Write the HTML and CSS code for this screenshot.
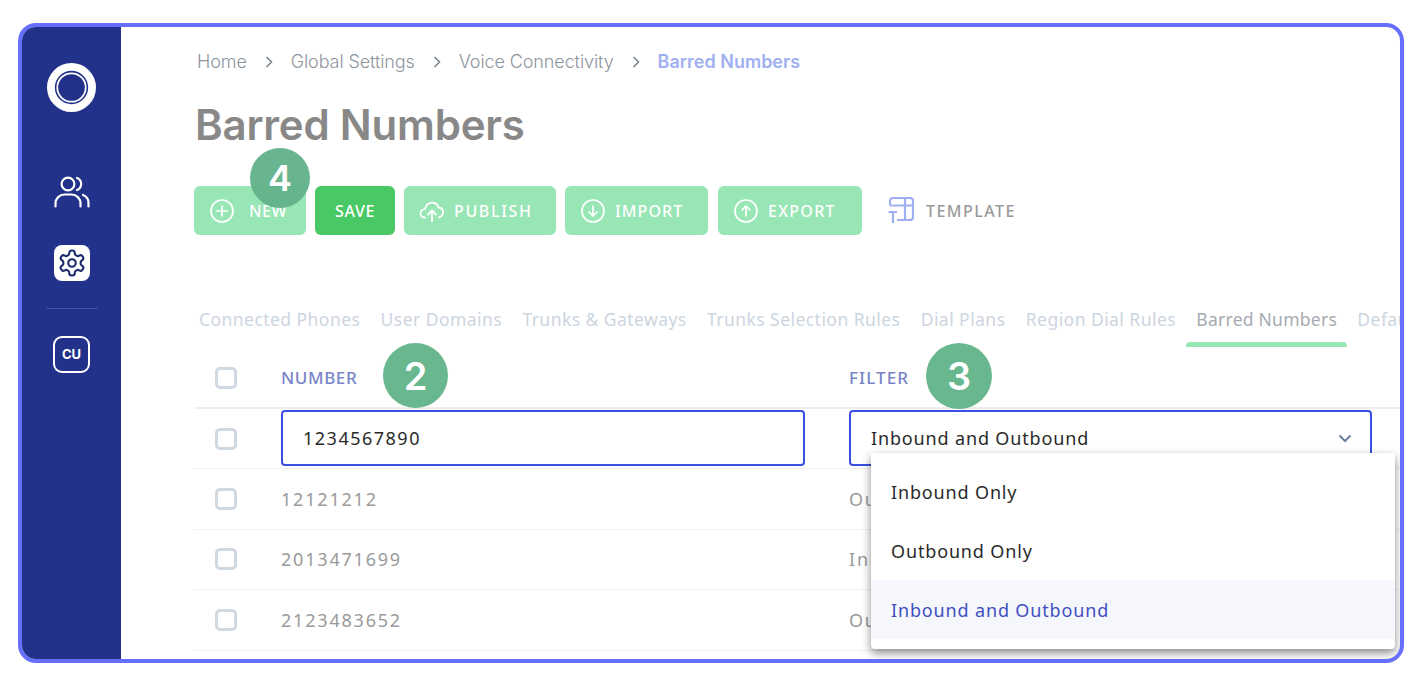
FILE: index.html
```html
<!DOCTYPE html>
<html lang="en">
<head>
<meta charset="utf-8">
<title>Barred Numbers</title>
<link rel="stylesheet" href="styles.css">
</head>
<body>
<div class="frame">
  <aside class="sidebar">
    <svg class="logo" viewBox="0 0 50 50"><circle cx="25" cy="25" r="25" fill="#fff"/><circle cx="25" cy="25" r="16.200" fill="none" stroke="#22328a" stroke-width="1.600"/><circle cx="25" cy="25" r="13.600" fill="#22328a"/></svg>
    <svg class="nav-users" viewBox="0 0 36 32" fill="none" stroke="#fff" stroke-width="2.200" stroke-linecap="round" stroke-linejoin="round"><circle cx="14" cy="8" r="6.400"/><path d="M1.500 30.500v-3a9 9 0 0 1 9-9h7a9 9 0 0 1 9 9v3"/><path d="M23 2a6.400 6.400 0 0 1 0 12"/><path d="M29 19a8.500 8.500 0 0 1 5.500 8v3.500"/></svg>
    <div class="nav-settings">
      <svg viewBox="0 0 24 24" fill="none" stroke="#1e2a6e" stroke-width="1.700" stroke-linecap="round" stroke-linejoin="round"><path d="M12.220 2h-.44a2 2 0 0 0-2 2v.18a2 2 0 0 1-1 1.730l-.43.250a2 2 0 0 1-2 0l-.15-.08a2 2 0 0 0-2.730.730l-.22.380a2 2 0 0 0 .730 2.730l.15.100a2 2 0 0 1 1 1.720v.510a2 2 0 0 1-1 1.740l-.15.090a2 2 0 0 0-.730 2.730l.22.380a2 2 0 0 0 2.730.730l.15-.08a2 2 0 0 1 2 0l.43.250a2 2 0 0 1 1 1.730V20a2 2 0 0 0 2 2h.44a2 2 0 0 0 2-2v-.18a2 2 0 0 1 1-1.730l.43-.25a2 2 0 0 1 2 0l.15.08a2 2 0 0 0 2.730-.73l.22-.39a2 2 0 0 0-.73-2.730l-.15-.08a2 2 0 0 1-1-1.740v-.5a2 2 0 0 1 1-1.740l.15-.09a2 2 0 0 0 .73-2.730l-.22-.38a2 2 0 0 0-2.730-.73l-.15.08a2 2 0 0 1-2 0l-.43-.25a2 2 0 0 1-1-1.730V4a2 2 0 0 0-2-2z"/><circle cx="12" cy="12" r="3"/></svg>
    </div>
    <div class="nav-rule"></div>
    <div class="nav-cu">CU</div>
  </aside>

  <main class="main">
    <nav class="crumbs">
      <span>Home</span><svg class="sep" viewBox="0 0 8 12"><path d="M1.500 1l5 5-5 5" fill="none" stroke="#7d8590" stroke-width="1.600"/></svg>
      <span>Global Settings</span><svg class="sep" viewBox="0 0 8 12"><path d="M1.500 1l5 5-5 5" fill="none" stroke="#7d8590" stroke-width="1.600"/></svg>
      <span>Voice Connectivity</span><svg class="sep" viewBox="0 0 8 12"><path d="M1.500 1l5 5-5 5" fill="none" stroke="#7d8590" stroke-width="1.600"/></svg>
      <span class="crumb-current">Barred Numbers</span>
    </nav>
    <h1 class="title">Barred Numbers</h1>

    <div class="toolbar">
      <button class="btn btn-new">
        <svg class="ico" viewBox="0 0 24 24" fill="none" stroke="#fff" stroke-width="1.700" stroke-linecap="round"><circle cx="12" cy="12" r="11"/><path d="M12 7v10M7 12h10"/></svg>NEW
      </button>
      <button class="btn btn-save">SAVE</button>
      <button class="btn btn-publish">
        <svg class="ico-cloud" viewBox="0 0 26 22" fill="none" stroke="#fff" stroke-width="1.800" stroke-linecap="round" stroke-linejoin="round"><path d="M6 17.500c-6 0-6-8 0-8.300C7 2 17 0 19.500 7.500c6 .5 6 8.500.5 9.800"/><path d="M13 21v-10M9 14.500l4-4 4 4"/></svg>PUBLISH
      </button>
      <button class="btn btn-import">
        <svg class="ico" viewBox="0 0 24 24" fill="none" stroke="#fff" stroke-width="1.700" stroke-linecap="round" stroke-linejoin="round"><circle cx="12" cy="12" r="11"/><path d="M12 7v10M8 13l4 4 4-4"/></svg>IMPORT
      </button>
      <button class="btn btn-export">
        <svg class="ico" viewBox="0 0 24 24" fill="none" stroke="#fff" stroke-width="1.700" stroke-linecap="round" stroke-linejoin="round"><circle cx="12" cy="12" r="11"/><path d="M12 17V7M8 11l4-4 4 4"/></svg>EXPORT
      </button>
      <div class="template">
        <svg class="ico-template" viewBox="0 0 26 27" fill="none" stroke="#9fb0f2" stroke-width="2.200"><path d="M2 8.500V4a3 3 0 0 1 3-3h17a3 3 0 0 1 3 3v16a3 3 0 0 1-3 3H9"/><path d="M2 8.500h23M17 1v22M.5 15H9M5 15v11"/></svg>
        <span>TEMPLATE</span>
      </div>
    </div>

    <div class="tabs">
      <span class="tab">Connected Phones</span>
      <span class="tab">User Domains</span>
      <span class="tab">Trunks &amp; Gateways</span>
      <span class="tab">Trunks Selection Rules</span>
      <span class="tab">Dial Plans</span>
      <span class="tab">Region Dial Rules</span>
      <span class="tab tab-active">Barred Numbers</span>
      <span class="tab">Default</span>
    </div>

    <div class="table">
      <div class="row row-head">
        <span class="check"></span><span class="th">NUMBER</span><span class="th th-filter">FILTER</span>
      </div>
      <div class="row row-edit">
        <span class="check"></span>
        <div class="field field-number">1234567890</div>
        <div class="field field-filter">Inbound and Outbound
          <svg class="chev" viewBox="0 0 14 9"><path d="M1.500 1.500L7 7l5.500-5.500" fill="none" stroke="#6f82a0" stroke-width="2"/></svg>
        </div>
      </div>
      <div class="row"><span class="check"></span><span class="cell">12121212</span><span class="cell">Outbound Only</span></div>
      <div class="row"><span class="check"></span><span class="cell">2013471699</span><span class="cell">Inbound Only</span></div>
      <div class="row"><span class="check"></span><span class="cell">2123483652</span><span class="cell">Outbound Only</span></div>
    </div>

    <ul class="menu">
      <li class="opt">Inbound Only</li>
      <li class="opt">Outbound Only</li>
      <li class="opt opt-on">Inbound and Outbound</li>
    </ul>

    <span class="badge badge-4">4</span>
    <span class="badge badge-2">2</span>
    <span class="badge badge-3">3</span>
  </main>
</div>
</body>
</html>
```
FILE: styles.css
```css
* { box-sizing: border-box; }
html, body { margin: 0; height: 100%; background: #fff; overflow: hidden; }
body { padding: 23px 21px 25px 18px; font-family: "Noto Sans", sans-serif; }

.frame {
  display: flex;
  height: 640px;
  border: 4px solid #666ffb;
  border-radius: 18px;
  overflow: hidden;
  background: #fff;
}

.sidebar {
  flex: 0 0 99px;
  background: #22328a;
  display: flex;
  flex-direction: column;
  align-items: center;
  padding-top: 36px;
}
.logo { width: 49px; height: 49px; }
.nav-users { width: 36px; height: 32px; margin-top: 64px; }
.nav-settings {
  width: 36px; height: 36px; margin-top: 37px;
  background: #fff; border-radius: 8px;
  display: flex; align-items: center; justify-content: center;
}
.nav-settings svg { width: 30px; height: 30px; }
.nav-rule { width: 52px; height: 1px; background: #44539d; margin-top: 27px; }
.nav-cu {
  width: 37px; height: 37px; margin-top: 27px;
  border: 2px solid #fff; border-radius: 9px;
  color: #fff; font: 700 13px/33px Inter, sans-serif; text-align: center;
}

.main { position: relative; flex: 1; min-width: 0; padding-left: 73px; overflow: hidden; }

.crumbs {
  display: flex; align-items: center;
  height: 24px; margin-top: 23px; padding-left: 3px;
  font: 300 18px/24px Inter, sans-serif; letter-spacing: -.1px; color: #8e959d;
}
.sep { width: 8px; height: 12px; margin: 0 18px; }
.crumb-current { color: #9fb0f2; font-weight: 600; letter-spacing: 0; }

.title {
  margin: 26px 0 0 1px;
  font: 600 42px/50px Inter, sans-serif; letter-spacing: -.2px; color: #888;
}

.toolbar { display: flex; align-items: center; margin-top: 36px; gap: 9px; }
.btn {
  display: flex; align-items: center; justify-content: flex-start;
  height: 49px; padding: 0 0 0 16px; border: 0; border-radius: 6px;
  background: #98e6b6; color: #fff;
  font: 500 16px/20px "Noto Sans", sans-serif; letter-spacing: 1.100px;
}
.btn-new { width: 112px; gap: 15px; letter-spacing: .6px; }
.btn-save { width: 80px; background: #48c965; letter-spacing: .7px; padding-left: 20px; }
.btn-publish { width: 152px; gap: 9px; padding-left: 15px; letter-spacing: 1.650px; }
.btn-import { width: 143px; gap: 10px; }
.btn-export { width: 144px; gap: 10px; margin-left: 1px; letter-spacing: 1.300px; }
.ico { width: 24px; height: 24px; flex: none; }
.ico-cloud { width: 26px; height: 22px; flex: none; }
.template {
  display: flex; align-items: center; gap: 12px; margin-left: 17px;
  font: 500 16px/20px "Noto Sans", sans-serif; letter-spacing: 1.450px; color: #9a9a9a;
}
.ico-template { width: 26px; height: 27px; }

.tabs {
  display: flex; gap: 20.300px; margin-top: 58px; height: 54px;
  padding-left: 5px; white-space: nowrap;
}
.tab {
  flex: none; height: 54px; line-height: 52px; font-size: 17.500px; letter-spacing: .45px; color: #ccd5e0; position: relative;
}
.tab-active { color: #a6abb2; letter-spacing: .25px; }
.tab-active::after {
  content: ""; position: absolute; left: -10px; right: -10px; bottom: 0;
  height: 5px; border-radius: 4px 4px 0 0; background: #98e6b6;
}

.table { margin-top: 1px; }
.row {
  display: grid; grid-template-columns: 87px 568px 1fr; align-items: center;
  height: 60.500px; border-bottom: 1px solid #eef0f3;
  font-size: 18px; letter-spacing: 1.800px; color: #9a9a9a;
}
.row-head { height: 61px; border-bottom: 2px solid #eeeeee; }
.row-edit { height: 60px; }
.check {
  width: 22px; height: 22px; margin-left: 21px;
  border: 3px solid #d0d8e2; border-radius: 5px;
}
.th { color: #7a84c8; font-size: 17px; letter-spacing: .6px; font-weight: 500; }
.th-filter { letter-spacing: 1.100px; }
.field {
  display: flex; align-items: center; justify-content: space-between;
  height: 56px; padding: 0 20px; margin-top: -1px;
  border: 2px solid #3a50e0; border-radius: 4px; color: #2a2a2a; letter-spacing: .85px;
}
.field-number { width: 524px; letter-spacing: 1.500px; }
.field-filter { width: 523px; }
.chev { width: 14px; height: 9px; margin-right: -2px; }
.cell { white-space: nowrap; }

.menu {
  position: absolute; left: 750px; top: 426px;
  width: 524px; height: 196px; margin: 0; padding: 9px 0;
  list-style: none;
  background: #fff; border-radius: 0 0 4px 4px;
  box-shadow: 0 4px 10px rgba(0,0,0,.45);
  font-size: 18px; letter-spacing: .85px; color: #2a2a2a;
}
.opt { height: 59px; line-height: 61px; padding-left: 20px; }
.opt-on { background: #f6f7fc; color: #3f4fc0; }

.badge {
  position: absolute; border-radius: 50%;
  display: flex; align-items: center; justify-content: center;
  background: #69b78f; color: #fff; font: 600 38px/1 Inter, sans-serif;
}
.badge-4 { left: 129px; top: 121px; width: 60px; height: 60px; font-size: 36px; background: rgba(98,178,138,.96); }
.badge-2 { left: 262px; top: 316px; width: 65px; height: 65px; }
.badge-3 { left: 805px; top: 316px; width: 66px; height: 66px; }
```
